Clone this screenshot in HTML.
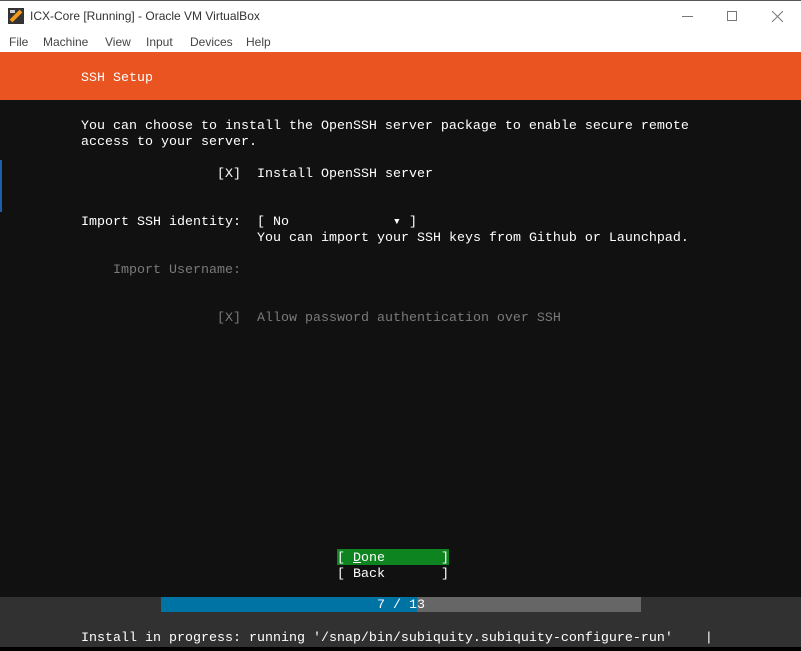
<!DOCTYPE html>
<html><head><meta charset="utf-8"><style>
*{margin:0;padding:0;box-sizing:border-box}
body{width:801px;height:651px;overflow:hidden;background:#111;position:relative;font-family:"Liberation Sans",sans-serif}
.title{position:absolute;left:0;top:0;width:801px;height:30px;background:#fff;border-top:1px solid #555}
.title span{position:absolute;left:30px;top:8px;font-size:12px;color:#333}
.menu{position:absolute;left:0;top:30px;width:801px;height:22px;background:#fff;font-size:12px;color:#444}
.menu span{position:absolute;top:5px}
.orange{position:absolute;left:0;top:52px;width:801px;height:48px;background:#e95420}
.t{position:absolute;font-family:"Liberation Mono",monospace;font-size:13.33px;line-height:16px;height:16px;color:#fff;white-space:pre;margin-top:2px}
.g{color:#7a7a7a}
.foot{position:absolute;left:0;top:597px;width:801px;height:50px;background:#313131}
.bot{position:absolute;left:0;top:647px;width:801px;height:4px;background:#000}
</style></head><body>
<div class="title">
<svg style="position:absolute;left:8px;top:7px" width="16" height="16"><rect width="16" height="16" fill="#333"/><path d="M3 13 L13 3" stroke="#f39a1e" stroke-width="4"/><rect x="2" y="2" width="5" height="3" fill="#ccc"/></svg>
<span>ICX-Core [Running] - Oracle VM VirtualBox</span>
<div style="position:absolute;left:682px;top:15px;width:11px;height:1px;background:#777"></div>
<div style="position:absolute;left:727px;top:10px;width:10px;height:10px;border:1px solid #777"></div>
<svg style="position:absolute;left:772px;top:10px" width="11" height="11"><path d="M0 0L11 11M11 0L0 11" stroke="#777"/></svg>
</div>
<div class="menu"><span style="left:9px">File</span><span style="left:43px">Machine</span><span style="left:105px">View</span><span style="left:146px">Input</span><span style="left:190px">Devices</span><span style="left:246px">Help</span></div>
<div style="position:absolute;left:0;top:160px;width:2px;height:52px;background:#1e5fa8"></div>
<div class="orange"></div>
<div class="t" style="left:81px;top:69px">SSH Setup</div>
<div class="t" style="left:81px;top:117px">You can choose to install the OpenSSH server package to enable secure remote</div>
<div class="t" style="left:81px;top:133px">access to your server.</div>
<div class="t" style="left:217px;top:165px">[X]  Install OpenSSH server</div>
<div class="t" style="left:81px;top:213px">Import SSH identity:  [ No             ▾ ]</div>
<div class="t" style="left:257px;top:229px">You can import your SSH keys from Github or Launchpad.</div>
<div class="t g" style="left:113px;top:261px">Import Username:</div>
<div class="t g" style="left:217px;top:309px">[X]  Allow password authentication over SSH</div>
<div style="position:absolute;left:337px;top:549px;width:112px;height:16px;background:#0e8420"></div>
<div class="t" style="left:337px;top:549px">[ <u>D</u>one       ]</div>
<div class="t" style="left:337px;top:565px">[ Back       ]</div>
<div class="foot"></div>
<div style="position:absolute;left:161px;top:597px;width:480px;height:15px;background:#666"></div>
<div style="position:absolute;left:161px;top:597px;width:256px;height:15px;background:#0073a5"></div>
<div class="t" style="left:377px;top:596px">7 / 13</div>
<div class="t" style="left:81px;top:629px">Install in progress: running '/snap/bin/subiquity.subiquity-configure-run'    |</div>
<div class="bot"></div>
</body></html>
